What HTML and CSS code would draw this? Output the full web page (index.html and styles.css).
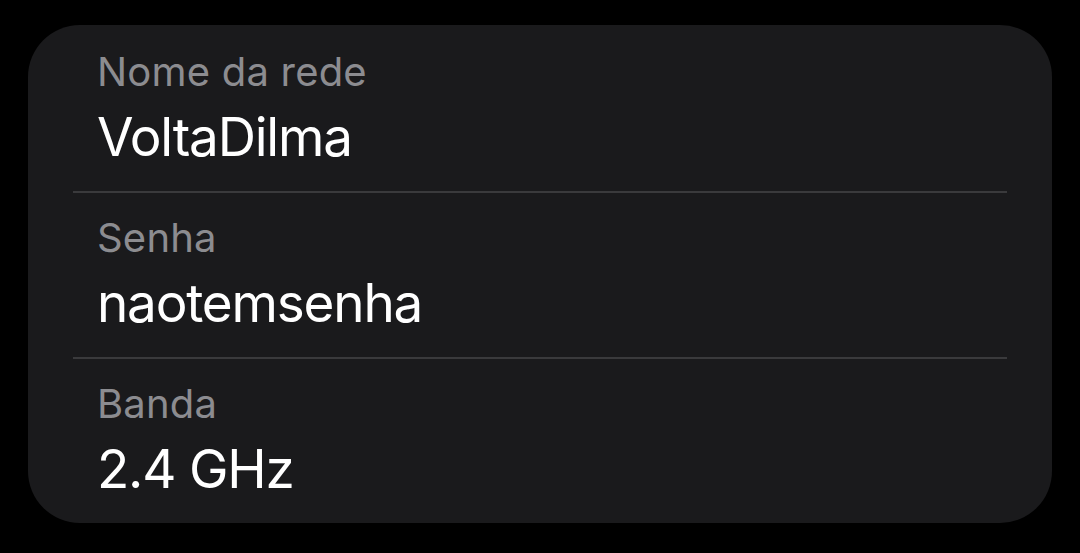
FILE: index.html
```html
<!DOCTYPE html>
<html lang="pt">
<head>
<meta charset="utf-8">
<link rel="stylesheet" href="styles.css">
</head>
<body>
<div class="card">
  <div class="row">
    <div class="label">Nome da rede</div>
    <div class="value">VoltaDilma</div>
  </div>
  <div class="row">
    <div class="label">Senha</div>
    <div class="value">naotemsenha</div>
  </div>
  <div class="row">
    <div class="label">Banda</div>
    <div class="value">2.4 GHz</div>
  </div>
</div>
</body>
</html>
```
FILE: styles.css
```css
html, body {
  margin: 0;
  background: #000;
}
body {
  padding: 25px 28px;
  font-family: Inter, Roboto, "Noto Sans", sans-serif;
}
.card {
  width: 1024px;
  box-sizing: border-box;
  background: #1a1a1c;
  border-radius: 52px;
  padding: 2px 45px 0;
}
.row {
  padding: 21px 24px 19px;
  border-bottom: 2px solid #3a3a3c;
}
.row:last-child {
  border-bottom: none;
}
.label {
  font-size: 40px;
  line-height: 48px;
  color: #8c8c90;
  letter-spacing: 0.2px;
}
.value {
  margin-top: 6px;
  font-size: 53px;
  line-height: 70px;
  color: #fff;
  letter-spacing: -1.2px;
}
```
